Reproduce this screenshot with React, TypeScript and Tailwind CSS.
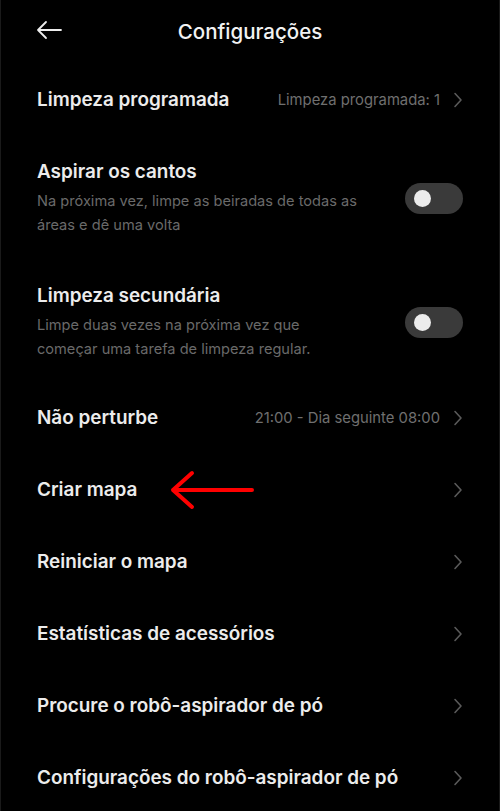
import React from 'react';

const font = { fontFamily: 'Inter, "Noto Sans", sans-serif' };

function Chevron() {
  return (
    <svg width="10" height="16" viewBox="0 0 10 16" className="shrink-0">
      <path d="M2 1.5 L8 8 L2 14.5" fill="none" stroke="#5a5a5a" strokeWidth="1.6" strokeLinecap="round" strokeLinejoin="round" />
    </svg>
  );
}

function Toggle() {
  return (
    <div className="w-[58px] h-[31px] rounded-full bg-[#3a3a3a] flex items-center pl-[9px] shrink-0">
      <div className="w-[17px] h-[17px] rounded-full bg-[#ececec]" />
    </div>
  );
}

function LinkRow({ title, value, children }: { title: string; value?: string; children?: React.ReactNode }) {
  return (
    <div className="relative h-[72px] flex items-center pl-[36px] pr-[36px]">
      <span className="text-[18.9px] font-semibold text-[#ececec]">{title}</span>
      <div className="ml-auto flex items-center gap-[13px]">
        {value && <span className="text-[14.8px] text-[#6f6f6f]">{value}</span>}
        <Chevron />
      </div>
      {children}
    </div>
  );
}

function ToggleRow({ title, lines }: { title: string; lines: string[] }) {
  return (
    <div className="flex items-center pl-[36px] pr-[36px]">
      <div className="flex-1">
        <div className="text-[18.9px] font-semibold text-[#ececec] leading-[26px]">{title}</div>
        <div className="mt-[4px] text-[14.6px] text-[#6a6a6a] leading-[24px]">
          {lines.map((l) => (
            <div key={l}>{l}</div>
          ))}
        </div>
      </div>
      <Toggle />
    </div>
  );
}

export default function App() {
  return (
    <div style={font} className="w-[500px] h-[811px] bg-black overflow-hidden border-x border-[#1a1a1a]">
      {/* Header */}
      <div className="relative h-[64px] flex items-center justify-center">
        <svg width="28" height="20" viewBox="0 0 28 20" className="absolute left-[34px] top-[20px]">
          <path d="M26 10 H3 M11 2 L3 10 L11 18" fill="none" stroke="#ededed" strokeWidth="1.8" strokeLinecap="round" strokeLinejoin="round" />
        </svg>
        <span className="text-[20.5px] text-[#f2f2f2] font-medium">Configurações</span>
      </div>

      <LinkRow title="Limpeza programada" value="Limpeza programada: 1" />

      <div className="mt-[23px]">
        <ToggleRow title="Aspirar os cantos" lines={['Na próxima vez, limpe as beiradas de todas as', 'áreas e dê uma volta']} />
      </div>

      <div className="mt-[46px]">
        <ToggleRow title="Limpeza secundária" lines={['Limpe duas vezes na próxima vez que', 'começar uma tarefa de limpeza regular.']} />
      </div>

      <div className="mt-[21px]">
        <LinkRow title="Não perturbe" value="21:00 - Dia seguinte 08:00" />
        <LinkRow title="Criar mapa">
          <svg width="90" height="44" viewBox="0 0 90 44" className="absolute left-[166px] top-[14px]">
            <path d="M85 22 H6 M25 5 L6 22 L25 39" fill="none" stroke="#ff0000" strokeWidth="4" strokeLinecap="round" strokeLinejoin="round" />
          </svg>
        </LinkRow>
        <LinkRow title="Reiniciar o mapa" />
        <LinkRow title="Estatísticas de acessórios" />
        <LinkRow title="Procure o robô-aspirador de pó" />
        <LinkRow title="Configurações do robô-aspirador de pó" />
      </div>
    </div>
  );
}
